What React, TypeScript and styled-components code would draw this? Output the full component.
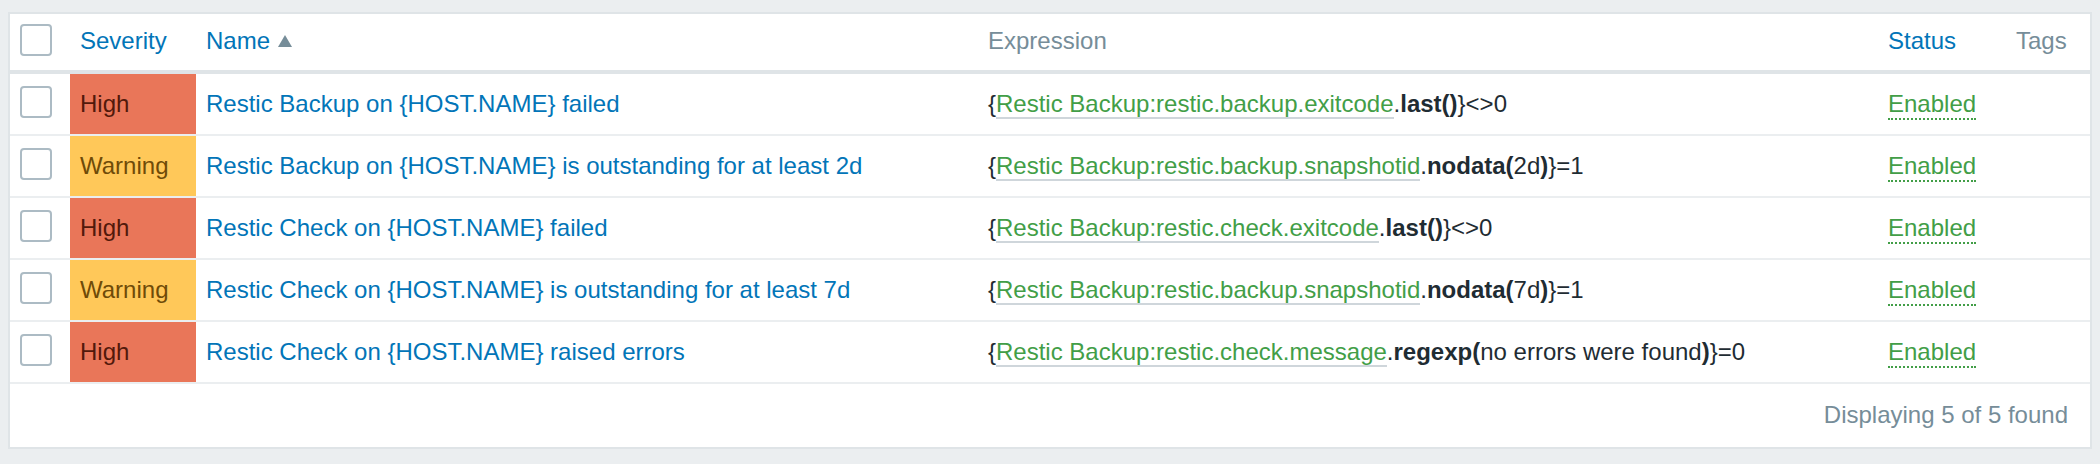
import React from "react";
import styled, { createGlobalStyle } from "styled-components";

const GlobalStyle = createGlobalStyle`
  html, body {
    margin: 0;
    padding: 0;
    background: #ebeef0;
    font-family: "Liberation Sans", Arial, sans-serif;
  }
`;

const Page = styled.div`
  padding: 12px 8px 0;
`;

const Panel = styled.div`
  background: #ffffff;
  border: 2px solid #dfe4e7;
`;

const Table = styled.table`
  width: 100%;
  table-layout: fixed;
  border-collapse: separate;
  border-spacing: 0;
  font-size: 24px;
  line-height: 28px;
  color: #1f2c33;
`;

const Th = styled.th`
  text-align: left;
  font-weight: normal;
  padding: 13px 10px 15px;
  border-bottom: 4px solid #dfe4e7;
  white-space: nowrap;
  color: #768d99;
  vertical-align: middle;
`;

const Td = styled.td<{ $sev?: "high" | "warning" }>`
  padding: 16px 10px;
  border-bottom: 2px solid #ebeef0;
  white-space: nowrap;
  vertical-align: middle;
  background: ${(p) =>
    p.$sev === "high" ? "#e97659" : p.$sev === "warning" ? "#ffc859" : "transparent"};
  color: ${(p) =>
    p.$sev === "high" ? "#52190b" : p.$sev === "warning" ? "#6f4b08" : "#1f2c33"};
`;

const Checkbox = styled.span<{ $head?: boolean }>`
  display: block;
  box-sizing: border-box;
  width: 32px;
  height: 32px;
  border: 2px solid #acbbc4;
  border-radius: 4px;
  background: #fff;
  margin: ${(p) => (p.$head ? "-3px 0 -1px" : "-4px 0 0")};
`;

const HeadLink = styled.span`
  color: #0275b8;
  display: inline-flex;
  align-items: center;
`;

const SortArrow = styled.span`
  display: inline-block;
  width: 0;
  height: 0;
  margin-left: 8px;
  border-left: 7.5px solid transparent;
  border-right: 7.5px solid transparent;
  border-bottom: 12px solid #768d99;
`;

const NameLink = styled.span`
  color: #0275b8;
`;

const ItemLink = styled.span`
  color: #429e47;
  border-bottom: 2px solid #cfd6db;
`;

const Bold = styled.b`
  font-weight: bold;
  color: #1f2c33;
`;

const StatusLink = styled.span`
  color: #429e47;
  border-bottom: 2px dotted #429e47;
  padding-bottom: 1px;
`;

const Footer = styled.div`
  display: flex;
  justify-content: flex-end;
  padding: 17px 22px 18px;
  font-size: 24px;
  line-height: 28px;
  color: #768d99;
`;

type Trigger = {
  sev: "high" | "warning";
  name: string;
  item: string;
  func: string;
  param: string;
  rest: string;
};

const triggers: Trigger[] = [
  { sev: "high", name: "Restic Backup on {HOST.NAME} failed", item: "Restic Backup:restic.backup.exitcode", func: "last", param: "", rest: "}<>0" },
  { sev: "warning", name: "Restic Backup on {HOST.NAME} is outstanding for at least 2d", item: "Restic Backup:restic.backup.snapshotid", func: "nodata", param: "2d", rest: "}=1" },
  { sev: "high", name: "Restic Check on {HOST.NAME} failed", item: "Restic Backup:restic.check.exitcode", func: "last", param: "", rest: "}<>0" },
  { sev: "warning", name: "Restic Check on {HOST.NAME} is outstanding for at least 7d", item: "Restic Backup:restic.backup.snapshotid", func: "nodata", param: "7d", rest: "}=1" },
  { sev: "high", name: "Restic Check on {HOST.NAME} raised errors", item: "Restic Backup:restic.check.message", func: "regexp", param: "no errors were found", rest: "}=0" },
];

export default function App() {
  return (
    <>
      <GlobalStyle />
      <Page>
        <Panel>
          <Table>
            <colgroup>
              <col style={{ width: 60 }} />
              <col style={{ width: 126 }} />
              <col style={{ width: 782 }} />
              <col style={{ width: 900 }} />
              <col style={{ width: 128 }} />
              <col />
            </colgroup>
            <thead>
              <tr>
                <Th>
                  <Checkbox $head />
                </Th>
                <Th>
                  <HeadLink>Severity</HeadLink>
                </Th>
                <Th>
                  <HeadLink>
                    Name
                    <SortArrow />
                  </HeadLink>
                </Th>
                <Th>Expression</Th>
                <Th>
                  <HeadLink>Status</HeadLink>
                </Th>
                <Th>Tags</Th>
              </tr>
            </thead>
            <tbody>
              {triggers.map((t, i) => (
                <tr key={i}>
                  <Td>
                    <Checkbox />
                  </Td>
                  <Td $sev={t.sev}>{t.sev === "high" ? "High" : "Warning"}</Td>
                  <Td>
                    <NameLink>{t.name}</NameLink>
                  </Td>
                  <Td>
                    {"{"}
                    <ItemLink>{t.item}</ItemLink>.<Bold>{t.func}(</Bold>
                    {t.param}
                    <Bold>)</Bold>
                    {t.rest}
                  </Td>
                  <Td>
                    <StatusLink>Enabled</StatusLink>
                  </Td>
                  <Td />
                </tr>
              ))}
            </tbody>
          </Table>
          <Footer>Displaying 5 of 5 found</Footer>
        </Panel>
      </Page>
    </>
  );
}
